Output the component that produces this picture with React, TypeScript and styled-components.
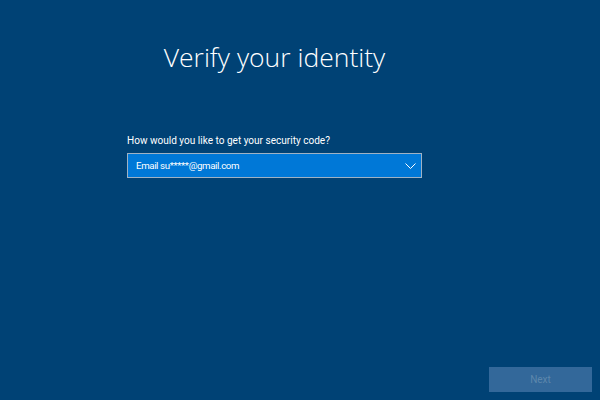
import * as React from 'react'
import styled, { createGlobalStyle } from 'styled-components'

const Global = createGlobalStyle`
  html, body {
    margin: 0;
    padding: 0;
    background: #004275;
  }
`
const Page = styled.div`
  width: 600px;
  height: 400px;
  box-sizing: border-box;
  overflow: hidden;
  display: flex;
  flex-direction: column;
  background: #004275;
  color: #fff;
  font-family: Roboto, 'Liberation Sans', sans-serif;
`
const Content = styled.div`
  flex: 1;
  width: 295px;
  margin-left: 127px;
  display: flex;
  flex-direction: column;
`
const Title = styled.h1`
  margin: 38px -60px 0;
  height: 38px;
  font-family: 'Open Sans', sans-serif;
  font-size: 26.5px;
  line-height: 38px;
  font-weight: 300;
  text-align: center;
  white-space: nowrap;
`
const Label = styled.div`
  margin-top: 57px;
  height: 15px;
  font-size: 10.05px;
  line-height: 15px;
`
const Select = styled.div`
  margin-top: 5px;
  height: 25px;
  box-sizing: border-box;
  display: flex;
  align-items: center;
  justify-content: space-between;
  padding: 0 5px 0 8px;
  background: #0078d7;
  border: 1px solid #9fb2c4;
  font-size: 9.7px;
  letter-spacing: -0.38px;
`
const Footer = styled.div`
  display: flex;
  justify-content: flex-end;
  padding: 0 8px 8px 0;
`
const NextButton = styled.button`
  width: 103px;
  height: 25px;
  padding: 0;
  border: none;
  background: #33689a;
  color: #5d87ac;
  font-family: inherit;
  font-size: 10px;
`

export default function App() {
  return (
    <Page>
      <Global />
      <Content>
        <Title>Verify your identity</Title>
        <Label>How would you like to get your security code?</Label>
        <Select>
          <span>Email su*****@gmail.com</span>
          <svg width="11" height="6" viewBox="0 0 11 6" fill="none" stroke="#fff" strokeWidth="1">
            <path d="M0.5 0.5 L5.5 5.5 L10.5 0.5" />
          </svg>
        </Select>
      </Content>
      <Footer>
        <NextButton disabled>Next</NextButton>
      </Footer>
    </Page>
  )
}
